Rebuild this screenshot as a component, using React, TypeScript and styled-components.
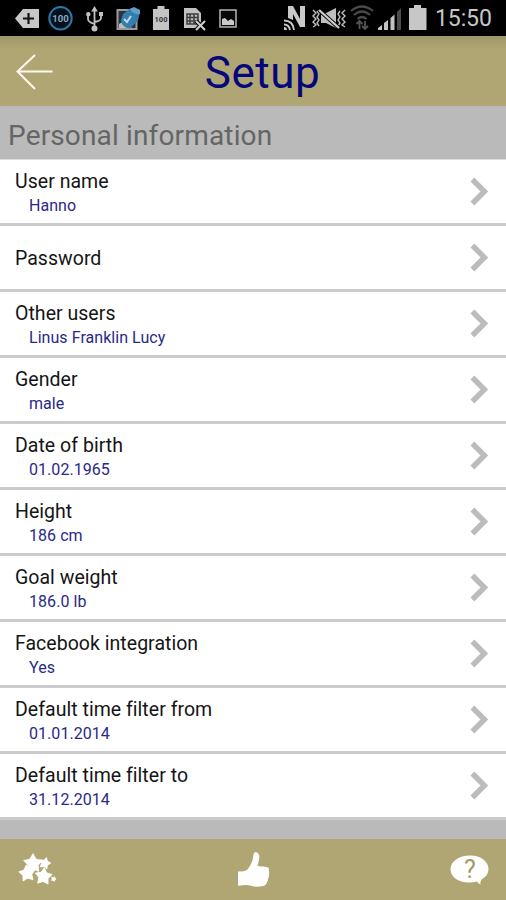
import React from "react";
import styled, { createGlobalStyle } from "styled-components";

const GlobalStyle = createGlobalStyle`
  * { box-sizing: border-box; }
  body { margin: 0; background: #bababa; font-family: Roboto, "Liberation Sans", sans-serif; }
`;

const Screen = styled.main`
  width: 506px;
  height: 900px;
  display: flex;
  flex-direction: column;
  overflow: hidden;
  background: #bababa;
`;

const StatusBar = styled.div`
  height: 36px;
  flex: none;
  display: flex;
  background: #000;
`;

const StatusIcon = styled.svg<{ $gap: number }>`
  flex: none;
  height: 36px;
  margin-left: ${(p) => p.$gap}px;
`;

const Clock = styled.span`
  margin-left: 8px;
  color: #c6c6c6;
  font-size: 23px;
  line-height: 37px;
  letter-spacing: -0.1px;
`;

const Header = styled.header`
  height: 70px;
  flex: none;
  display: grid;
  grid-template-columns: 100px 1fr 81px;
  align-items: center;
  background: linear-gradient(#9f976a, #b0a673 14px);
`;

const BackButton = styled.button`
  display: flex;
  width: 60px;
  height: 70px;
  padding: 17px 0 0 15px;
  border: 0;
  background: none;
`;

const Title = styled.h1`
  margin: 0;
  padding-top: 3px;
  color: #07077c;
  font-size: 44px;
  font-weight: 400;
  line-height: 52px;
  letter-spacing: 0.5px;
  text-align: center;
`;

const SectionTitle = styled.h2`
  height: 53px;
  flex: none;
  margin: 0;
  padding: 3px 8px 0;
  color: #656565;
  font-size: 28px;
  font-weight: 400;
  line-height: 53px;
  letter-spacing: 0.15px;
`;

const List = styled.div`
  flex: none;
  display: flex;
  flex-direction: column;
  border-top: 1px solid #dedede;
`;

const Row = styled.div`
  height: 66.06px;
  display: flex;
  align-items: center;
  justify-content: space-between;
  padding: 0 17px 0 15px;
  border-bottom: 3px solid #cbcbcb;
  background: #fff;
`;

const RowText = styled.div<{ $single: boolean }>`
  display: flex;
  flex-direction: column;
  padding-top: ${(p) => (p.$single ? 2 : 4)}px;
`;

const Label = styled.span`
  color: #151515;
  font-size: 19.5px;
  line-height: 24px;
  letter-spacing: 0.03px;
`;

const Value = styled.span`
  padding-left: 14px;
  color: #29298a;
  font-size: 16px;
  line-height: 24px;
  letter-spacing: 0.05px;
`;

const Footer = styled.footer`
  height: 61px;
  flex: none;
  margin-top: auto;
  display: flex;
  align-items: center;
  justify-content: space-between;
  padding: 0 15px 0 18px;
  background: #b0a673;
`;

const FooterButton = styled.button`
  display: flex;
  padding: 0;
  border: 0;
  background: none;
`;

const GlyphText = styled.text`
  font-family: Roboto, sans-serif;
`;

const settings: { label: string; value?: string }[] = [
  { label: "User name", value: "Hanno" },
  { label: "Password" },
  { label: "Other users", value: "Linus Franklin Lucy" },
  { label: "Gender", value: "male" },
  { label: "Date of birth", value: "01.02.1965" },
  { label: "Height", value: "186 cm" },
  { label: "Goal weight", value: "186.0 lb" },
  { label: "Facebook integration", value: "Yes" },
  { label: "Default time filter from", value: "01.01.2014" },
  { label: "Default time filter to", value: "31.12.2014" },
];

const starPoints = (cx: number, cy: number, r: number, turn: number) =>
  Array.from({ length: 10 }, (_, i) => {
    const radius = i % 2 ? r * 0.55 : r;
    const a = ((turn - 90 + i * 36) * Math.PI) / 180;
    return `${(cx + radius * Math.cos(a)).toFixed(2)},${(cy + radius * Math.sin(a)).toFixed(2)}`;
  }).join(" ");

const StatusIcons = () => (
  <>
    <StatusIcon $gap={15} width="24" viewBox="0 0 24 36">
      <path d="M0 18.5 8 9h16v19H8z" fill="#c8c8c8" />
      <path d="M8 18.5h11M13.5 13v11" stroke="#141414" strokeWidth="2.2" />
    </StatusIcon>
    <StatusIcon $gap={9} width="25" viewBox="0 0 25 36">
      <circle cx="12.5" cy="18.3" r="11.2" fill="#04101a" stroke="#2878a8" strokeWidth="2" />
      <GlyphText x="12.5" y="21.8" textAnchor="middle" fontSize="9.5" fontWeight="700" fill="#8aabbd">100</GlyphText>
    </StatusIcon>
    <StatusIcon $gap={13} width="17" viewBox="0 0 17 36">
      <path d="M8.5 10v18M2 14v5q0 3 6.5 5M15 14v4q0 3-6.5 4" fill="none" stroke="#c0c0c0" strokeWidth="1.8" />
      <path d="m8.5 6 3.3 5.5H5.2z" fill="#c0c0c0" />
      <circle cx="8.5" cy="28.5" r="3" fill="#c0c0c0" />
      <circle cx="2.3" cy="14.3" r="2.2" fill="#c0c0c0" />
      <path d="M13 12h4v4h-4z" fill="#c0c0c0" />
    </StatusIcon>
    <StatusIcon $gap={13} width="25" viewBox="0 0 25 36">
      <path d="M1.5 10h19v19h-19z" fill="#29343c" stroke="#9b9b9b" strokeWidth="2" />
      <path d="m3 24 5-3 8 7H3z" fill="#bbb" />
      <path d="M7 14 15 8l9 3.5-2 9-8 8q-8-1-9-8z" fill="#347daf" />
      <path d="m14 9 4-2 6 3v4q-7 1-10-5z" fill="#649dc5" />
      <path d="m8 19 3 3 4-6" fill="none" stroke="#c2dae6" strokeWidth="2" />
    </StatusIcon>
    <StatusIcon $gap={12} width="16" viewBox="0 0 16 36">
      <path d="M4.5 6h7v3H16v21H0V9h4.5z" fill="#c4c4c4" />
      <GlyphText x="8" y="21.5" textAnchor="middle" fontSize="7.5" fontWeight="700" fill="#343434">100</GlyphText>
    </StatusIcon>
    <StatusIcon $gap={15} width="23" viewBox="0 0 23 36">
      <path d="M0 8h12l5 5v15H0z" fill="#c1c1c1" />
      <path d="M3 14h11v10H3zM6 14v10M10 14v10M3 17.5h11M3 21h11" fill="none" stroke="#3b3b3b" strokeWidth="1.5" />
      <path d="m12 21 9 9m0-9-9 9" stroke="#000" strokeWidth="4" />
      <path d="m12 21 9 9m0-9-9 9" stroke="#d1d1d1" strokeWidth="2" />
    </StatusIcon>
    <StatusIcon $gap={12} width="18" viewBox="0 0 18 36">
      <path d="M1 10h16v17H1z" fill="#080808" stroke="#b5b5b5" strokeWidth="1.5" />
      <path d="M3 25v-6l3-1 3 3 3-2 3 2v4z" fill="#c9c9c9" />
    </StatusIcon>
    <StatusIcon $gap={47} width="22" viewBox="0 0 22 36">
      <path d="M4 18V6h5l7 13V6h5v21h-5L9 14v6z" fill="#c9c9c9" />
      <path d="M0 20.5q9 0 10 9.5M0 24.5q5 0 6 5.5" fill="none" stroke="#c9c9c9" strokeWidth="1.8" />
      <path d="M0 27q3 0 3 3H0z" fill="#c9c9c9" />
    </StatusIcon>
    <StatusIcon $gap={6} width="34" viewBox="0 0 34 36">
      <path d="m1 10 3 3-3 3 3 3-3 3 3 3-3 2M5 11l2 3-2 3 2 3-2 3 2 3M33 10l-3 3 3 3-3 3 3 3-3 3 3 2M28 11l-2 3 2 3-2 3 2 3-2 3" fill="none" stroke="#bebebe" strokeWidth="1.4" />
      <path d="M9 13h5l10-5v20l-10-5H9z" fill="#bfbfbf" />
      <path d="m7 10 20 18" stroke="#000" strokeWidth="3.8" />
      <path d="m7 10 20 18" stroke="#cecece" strokeWidth="2.3" />
    </StatusIcon>
    <StatusIcon $gap={4} width="24" viewBox="0 0 24 36">
      <path d="M1 11q11-9 22 0M4 15q8-7 16 0M7.5 19q4.5-4 9 0" fill="none" stroke="#494949" strokeWidth="2.2" />
      <path d="M9.5 29v-8m-3 3 3-3 3 3M15 21v8m-3-3 3 3 3-3" fill="none" stroke="#555" strokeWidth="1.8" />
    </StatusIcon>
    <StatusIcon $gap={4} width="24" viewBox="0 0 24 36">
      <path d="M0 30v-2l4-3v5zM6 30v-7l4-3v10zM12.5 30V18l4-3.5V30z" fill="#c3c3c3" />
      <path d="M19 30V12l4-4v22z" fill="#4c4c4c" />
    </StatusIcon>
    <StatusIcon $gap={7} width="18" viewBox="0 0 18 36">
      <path d="M5 5h7v3h5.5v22H0V8h5z" fill="#c7c7c7" />
    </StatusIcon>
  </>
);

const BackArrow = () => (
  <svg width="40" height="38" viewBox="0 0 40 38">
    <path d="M37.5 18.5H2.5M20 2 2.5 18.5 20 36" fill="none" stroke="#fff9ed" strokeWidth="2" />
  </svg>
);

const Chevron = () => (
  <svg width="20" height="30" viewBox="0 0 20 30">
    <path d="m3.4 2.5 12 12-12 12" fill="none" stroke="#bcbcbc" strokeWidth="5.4" />
  </svg>
);

const StarsIcon = () => (
  <svg width="40" height="34" viewBox="0 0 40 34">
    <g fill="#fff" stroke="#fff" strokeWidth="0.8" strokeLinejoin="round">
      <polygon points={starPoints(15, 10.5, 9.8, 0)} />
      <polygon points={starPoints(26.8, 10.3, 6, 16)} />
      <polygon points={starPoints(9.2, 20.5, 8.6, -7)} />
      <polygon points={starPoints(25.5, 23.5, 8.9, 5)} />
      <polygon points={starPoints(35.6, 26, 2.5, 20)} />
    </g>
  </svg>
);

const ThumbIcon = () => (
  <svg width="32" height="37" viewBox="0 0 32 37">
    <path d="M0 20.5q5 .5 9-1.5 5-6 6-12 .2-6 3-6 4 1 3.2 7L19.5 15q6 .5 10.3 1.2 1.7 1 .9 3.3 1 2 .1 4 .6 2-.7 4 .2 2-1.1 3.5-.5 3-4 4-8 1.8-14-.7Q8 33.5 0 34.8z" fill="#fff" />
  </svg>
);

const HelpIcon = () => (
  <svg width="42" height="34" viewBox="0 0 42 34">
    <path d="M21 2.5C10 2.5 1.5 8.5 1.5 16.3S9 29.5 20 29.5q4 0 8-1 1 2 3.5 3-.5-3 1-5 7-4 7-10.2C39.5 8.5 32 2.5 21 2.5z" fill="#fff" />
    <GlyphText x="20.8" y="25" textAnchor="middle" fontSize="25" fill="#a69a65">?</GlyphText>
  </svg>
);

export default function App() {
  return (
    <>
      <GlobalStyle />
      <Screen>
        <StatusBar>
          <StatusIcons />
          <Clock>15:50</Clock>
        </StatusBar>
        <Header>
          <BackButton aria-label="Back"><BackArrow /></BackButton>
          <Title>Setup</Title>
        </Header>
        <SectionTitle>Personal information</SectionTitle>
        <List>
          {settings.map(({ label, value }) => (
            <Row key={label}>
              <RowText $single={!value}>
                <Label>{label}</Label>
                {value && <Value>{value}</Value>}
              </RowText>
              <Chevron />
            </Row>
          ))}
        </List>
        <Footer>
          <FooterButton aria-label="Favorites"><StarsIcon /></FooterButton>
          <FooterButton aria-label="Like"><ThumbIcon /></FooterButton>
          <FooterButton aria-label="Help"><HelpIcon /></FooterButton>
        </Footer>
      </Screen>
    </>
  );
}
